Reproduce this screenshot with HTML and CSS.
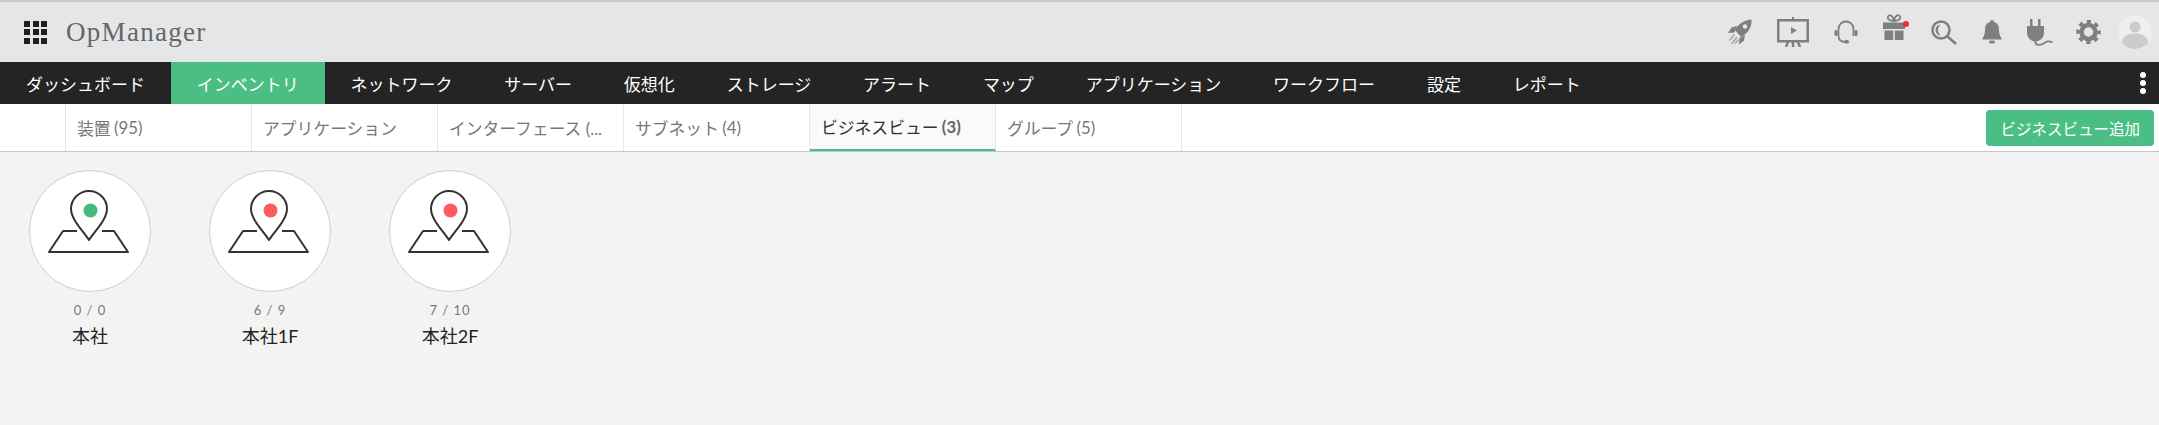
FILE: index.html
```html
<!DOCTYPE html>
<html lang="ja">
<head>
    <meta charset="UTF-8">
    <meta name="viewport" content="width=device-width, initial-scale=1.0">
    <title>OpManager</title>
    <link rel="stylesheet" href="styles.css">
</head>
<body>
    <header class="topbar">
        <div class="apps"><i></i><i></i><i></i><i></i><i></i><i></i><i></i><i></i><i></i></div>
        <div class="logo">OpManager</div>
        <div class="tools">
            <span class="tool tool-mid">
                <svg width="24" height="26" viewBox="0 0 24 26">
                    <path d="M23.500 .5C16 1 10 5 7 11l6 7C20 14.500 24 8 23.500 .5z"/>
                    <path d="M9 7L3.500 8.500 0 14l6.500-.5zM17 16l-1 5.500-5 4 .5-6.500z"/>
                    <circle cx="17" cy="7.500" r="2.200" class="hole"/>
                    <path d="M6.500 15.500L1.500 21.500M9 18L3.500 25M10.500 20.500l-3.500 4" class="streak"/>
                </svg>
            </span>
            <span class="tool tool-wide">
                <svg width="32" height="30" viewBox="0 0 32 30">
                    <rect x="15" y="0" width="2" height="3"/>
                    <rect x="1.250" y="3.250" width="29.500" height="21" class="line"/>
                    <path d="M14 10l6 3.500-6 3.500z"/>
                    <path d="M9 30l2-5M16 25v5M23 30l-2-5" class="line"/>
                </svg>
            </span>
            <span class="tool tool-mid">
                <svg width="24" height="24" viewBox="0 0 24 24">
                    <path d="M4.500 9a7.500 7.500 0 0 1 15 0v7M4.500 9v7c0 4 3 6 7 6" class="line thin"/>
                    <rect x="0.500" y="10" width="3" height="6" rx="1.500"/>
                    <rect x="20.500" y="10" width="3" height="6" rx="1.500"/>
                    <rect x="10" y="20" width="5" height="3.500" rx="1.750"/>
                </svg>
            </span>
            <span class="tool">
                <svg width="26" height="36" viewBox="0 0 26 36">
                    <path d="M11 7C7 7 4 5 5 2.500S10 1 11 7c1-6 5-7 6-4.500S15 7 11 7z" class="line thin"/>
                    <path d="M0 8.600h22V15H0zM1.500 16.600h8.700V26H1.500zM11.800 16.600h8.700V26h-8.700z"/>
                    <circle cx="23" cy="10" r="3" class="alert"/>
                </svg>
            </span>
            <span class="tool">
                <svg width="26" height="25" viewBox="0 0 26 25">
                    <circle cx="10" cy="10" r="8.500" class="line"/>
                    <path d="M10 4.500a5.500 5.500 0 0 0 0 11 6.500 6.500 0 0 1 0-11z"/>
                    <path d="M16.500 16.500L25 24" class="line"/>
                </svg>
            </span>
            <span class="tool">
                <svg width="20" height="24" viewBox="0 0 20 24">
                    <path d="M10 0a2 2 0 0 1 2 2c4 1 5 4 5 8 0 4 1 6 3 9.500H0c2-3.500 3-5.500 3-9.500 0-4 1-7 5-8a2 2 0 0 1 2-2z"/>
                    <rect x="7" y="20.500" width="6" height="3" rx="1.500"/>
                </svg>
            </span>
            <span class="tool">
                <svg width="26" height="27" viewBox="0 0 26 27">
                    <path d="M3 0h2.500v7H3zM11 0h2.500v7H11zM0 7h17v7a8.500 8.500 0 0 1-17 0z"/>
                    <path d="M8.500 22v1.500c0 3 4.500 3 8 1s5-3 9-1" class="line thin"/>
                </svg>
            </span>
            <span class="tool">
                <svg width="25" height="24" viewBox="0 0 25 24">
                    <circle cx="12.500" cy="12" r="7" class="line gear-ring"/>
                    <circle cx="12.500" cy="12" r="10.500" class="line gear-teeth"/>
                </svg>
            </span>
            <svg class="avatar" width="34" height="35" viewBox="0 0 34 35">
                <circle cx="17" cy="17" r="17" class="avatar-bg"/>
                <circle cx="17" cy="12" r="5.500" class="avatar-fg"/>
                <path d="M4 28c0-7 6-9.500 13-9.500S30 21 30 28c-3 3-8 6-13 6S7 31 4 28z" class="avatar-fg"/>
            </svg>
        </div>
    </header>

    <nav class="mainnav">
        <a>ダッシュボード</a>
        <a class="active">インベントリ</a>
        <a>ネットワーク</a>
        <a>サーバー</a>
        <a>仮想化</a>
        <a>ストレージ</a>
        <a>アラート</a>
        <a>マップ</a>
        <a>アプリケーション</a>
        <a>ワークフロー</a>
        <a>設定</a>
        <a>レポート</a>
        <div class="more"><i></i><i></i><i></i></div>
    </nav>

    <div class="subbar">
        <div class="subtab subtab-blank"></div>
        <div class="subtab">装置 <span>(95)</span></div>
        <div class="subtab">アプリケーション</div>
        <div class="subtab">インターフェース (...</div>
        <div class="subtab">サブネット <span>(4)</span></div>
        <div class="subtab current">ビジネスビュー <span>(3)</span></div>
        <div class="subtab">グループ <span>(5)</span></div>
        <button class="add-btn">ビジネスビュー追加</button>
    </div>

    <svg class="defs" width="0" height="0">
        <symbol id="map-pin" viewBox="1 1 120 120">
            <path d="M61 71C55 62 43 50 43 40a18 18 0 0 1 36 0C79 50 67 62 61 71z"/>
            <path d="M49 62H35L21 83H100L86 62H74"/>
        </symbol>
    </svg>

    <main class="views">
        <div class="view">
            <div class="pin-circle">
                <svg width="120" height="120" viewBox="1 1 120 120">
                    <use href="#map-pin" class="pin-lines"/>
                    <circle cx="61.500" cy="40.500" r="7" class="ok"/>
                </svg>
            </div>
            <div class="count">0 / 0</div>
            <div class="name">本社</div>
        </div>
        <div class="view">
            <div class="pin-circle">
                <svg width="120" height="120" viewBox="1 1 120 120">
                    <use href="#map-pin" class="pin-lines"/>
                    <circle cx="61.500" cy="40.500" r="7" class="bad"/>
                </svg>
            </div>
            <div class="count">6 / 9</div>
            <div class="name">本社1F</div>
        </div>
        <div class="view">
            <div class="pin-circle">
                <svg width="120" height="120" viewBox="1 1 120 120">
                    <use href="#map-pin" class="pin-lines"/>
                    <circle cx="61.500" cy="40.500" r="7" class="bad"/>
                </svg>
            </div>
            <div class="count">7 / 10</div>
            <div class="name">本社2F</div>
        </div>
    </main>
</body>
</html>
```

FILE: styles.css
```css
html, body {
    height: 100%;
}

body {
    margin: 0;
    display: flex;
    flex-direction: column;
    background: #f3f3f3;
    font-family: Lato, "Noto Sans CJK JP", sans-serif;
    overflow: hidden;
}

/* top header */
.topbar {
    height: 60px;
    flex: none;
    display: flex;
    align-items: center;
    padding-left: 24px;
    background: #e5e6e8;
    border-top: 2px solid #c9cbcd;
}

.apps {
    display: grid;
    grid-template-columns: repeat(3, 6px);
    grid-auto-rows: 6px;
    gap: 2.5px;
}

.apps i {
    background: #1f1f1f;
}

.logo {
    margin-left: 19px;
    font-family: "Liberation Serif", serif;
    font-size: 27px;
    letter-spacing: 1.300px;
    color: #666;
}

.tools {
    margin-left: auto;
    padding-right: 7px;
    display: flex;
    align-items: center;
}

.tool {
    width: 48px;
    display: flex;
    justify-content: center;
}

.tool-mid {
    width: 52px;
}

.tool-wide {
    width: 54px;
}

.tools svg {
    display: block;
    fill: #7d7f81;
}

.line {
    fill: none;
    stroke: #7d7f81;
    stroke-width: 2.5;
}

.line.thin {
    stroke-width: 1.8;
}

.hole {
    fill: #e5e6e8;
}

.streak {
    fill: none;
    stroke: #a5a7a9;
    stroke-width: 1.5;
}

.tools svg .alert {
    fill: #f5283c;
}

.gear-ring {
    stroke-width: 4.5;
}

.gear-teeth {
    stroke-width: 3.5;
    stroke-dasharray: 4.2 4.05;
    stroke-dashoffset: 2.1;
}

.avatar {
    margin-left: 6px;
}

.tools svg .avatar-bg {
    fill: #efefef;
}

.tools svg .avatar-fg {
    fill: #cbcbcb;
}

/* main menu */
.mainnav {
    height: 42px;
    flex: none;
    display: flex;
    align-items: center;
    background: #242424;
    color: #fff;
    font-size: 17px;
}

.mainnav a {
    height: 100%;
    display: flex;
    align-items: center;
    padding: 0 25.900px;
}

.mainnav a.active {
    background: #4bbf83;
}

.more {
    margin-left: auto;
    padding-right: 13px;
    display: flex;
    flex-direction: column;
    gap: 2px;
}

.more i {
    width: 6px;
    height: 6px;
    border-radius: 50%;
    background: #fff;
}

/* sub tabs */
.subbar {
    height: 47px;
    flex: none;
    display: flex;
    align-items: center;
    background: #fff;
    border-bottom: 1px solid #c4c6c8;
}

.subtab {
    width: 186px;
    height: 100%;
    box-sizing: border-box;
    display: flex;
    align-items: center;
    gap: 0.2em;
    padding-left: 11px;
    border-right: 1px solid #e6e6e6;
    font-size: 16.800px;
    color: #777;
    white-space: nowrap;
    overflow: hidden;
}

.subtab-blank {
    width: 66px;
    padding: 0;
}

.subtab.current {
    background: #fafafa;
    color: #333;
    border-bottom: 2px solid #4bbf83;
}

.subtab.current span {
    color: #666;
    font-weight: 700;
}

.add-btn {
    margin-left: auto;
    margin-right: 5px;
    height: 36px;
    padding: 0 14px;
    border: none;
    border-radius: 4px;
    background: #4bbf83;
    color: #fff;
    font-family: inherit;
    font-size: 15.500px;
}

/* business views */
.defs {
    position: absolute;
}

.views {
    flex: 1;
    display: flex;
    align-items: flex-start;
    padding-top: 18px;
}

.view {
    width: 180px;
    display: flex;
    flex-direction: column;
    align-items: center;
}

.pin-circle {
    width: 122px;
    height: 122px;
    box-sizing: border-box;
    border: 1px solid #c9ced3;
    border-radius: 50%;
    background: #fff;
}

.pin-circle svg {
    display: block;
}

.pin-lines {
    fill: none;
    stroke: #333;
    stroke-width: 2;
    stroke-linejoin: round;
}

.ok {
    fill: #46b97e;
}

.bad {
    fill: #ff5a5e;
}

.count {
    margin-top: 9px;
    font-size: 13px;
    line-height: 18px;
    letter-spacing: 1px;
    color: #7a7a7a;
}

.name {
    margin-top: 4px;
    font-size: 18px;
    line-height: 26px;
    color: #222;
}
```
